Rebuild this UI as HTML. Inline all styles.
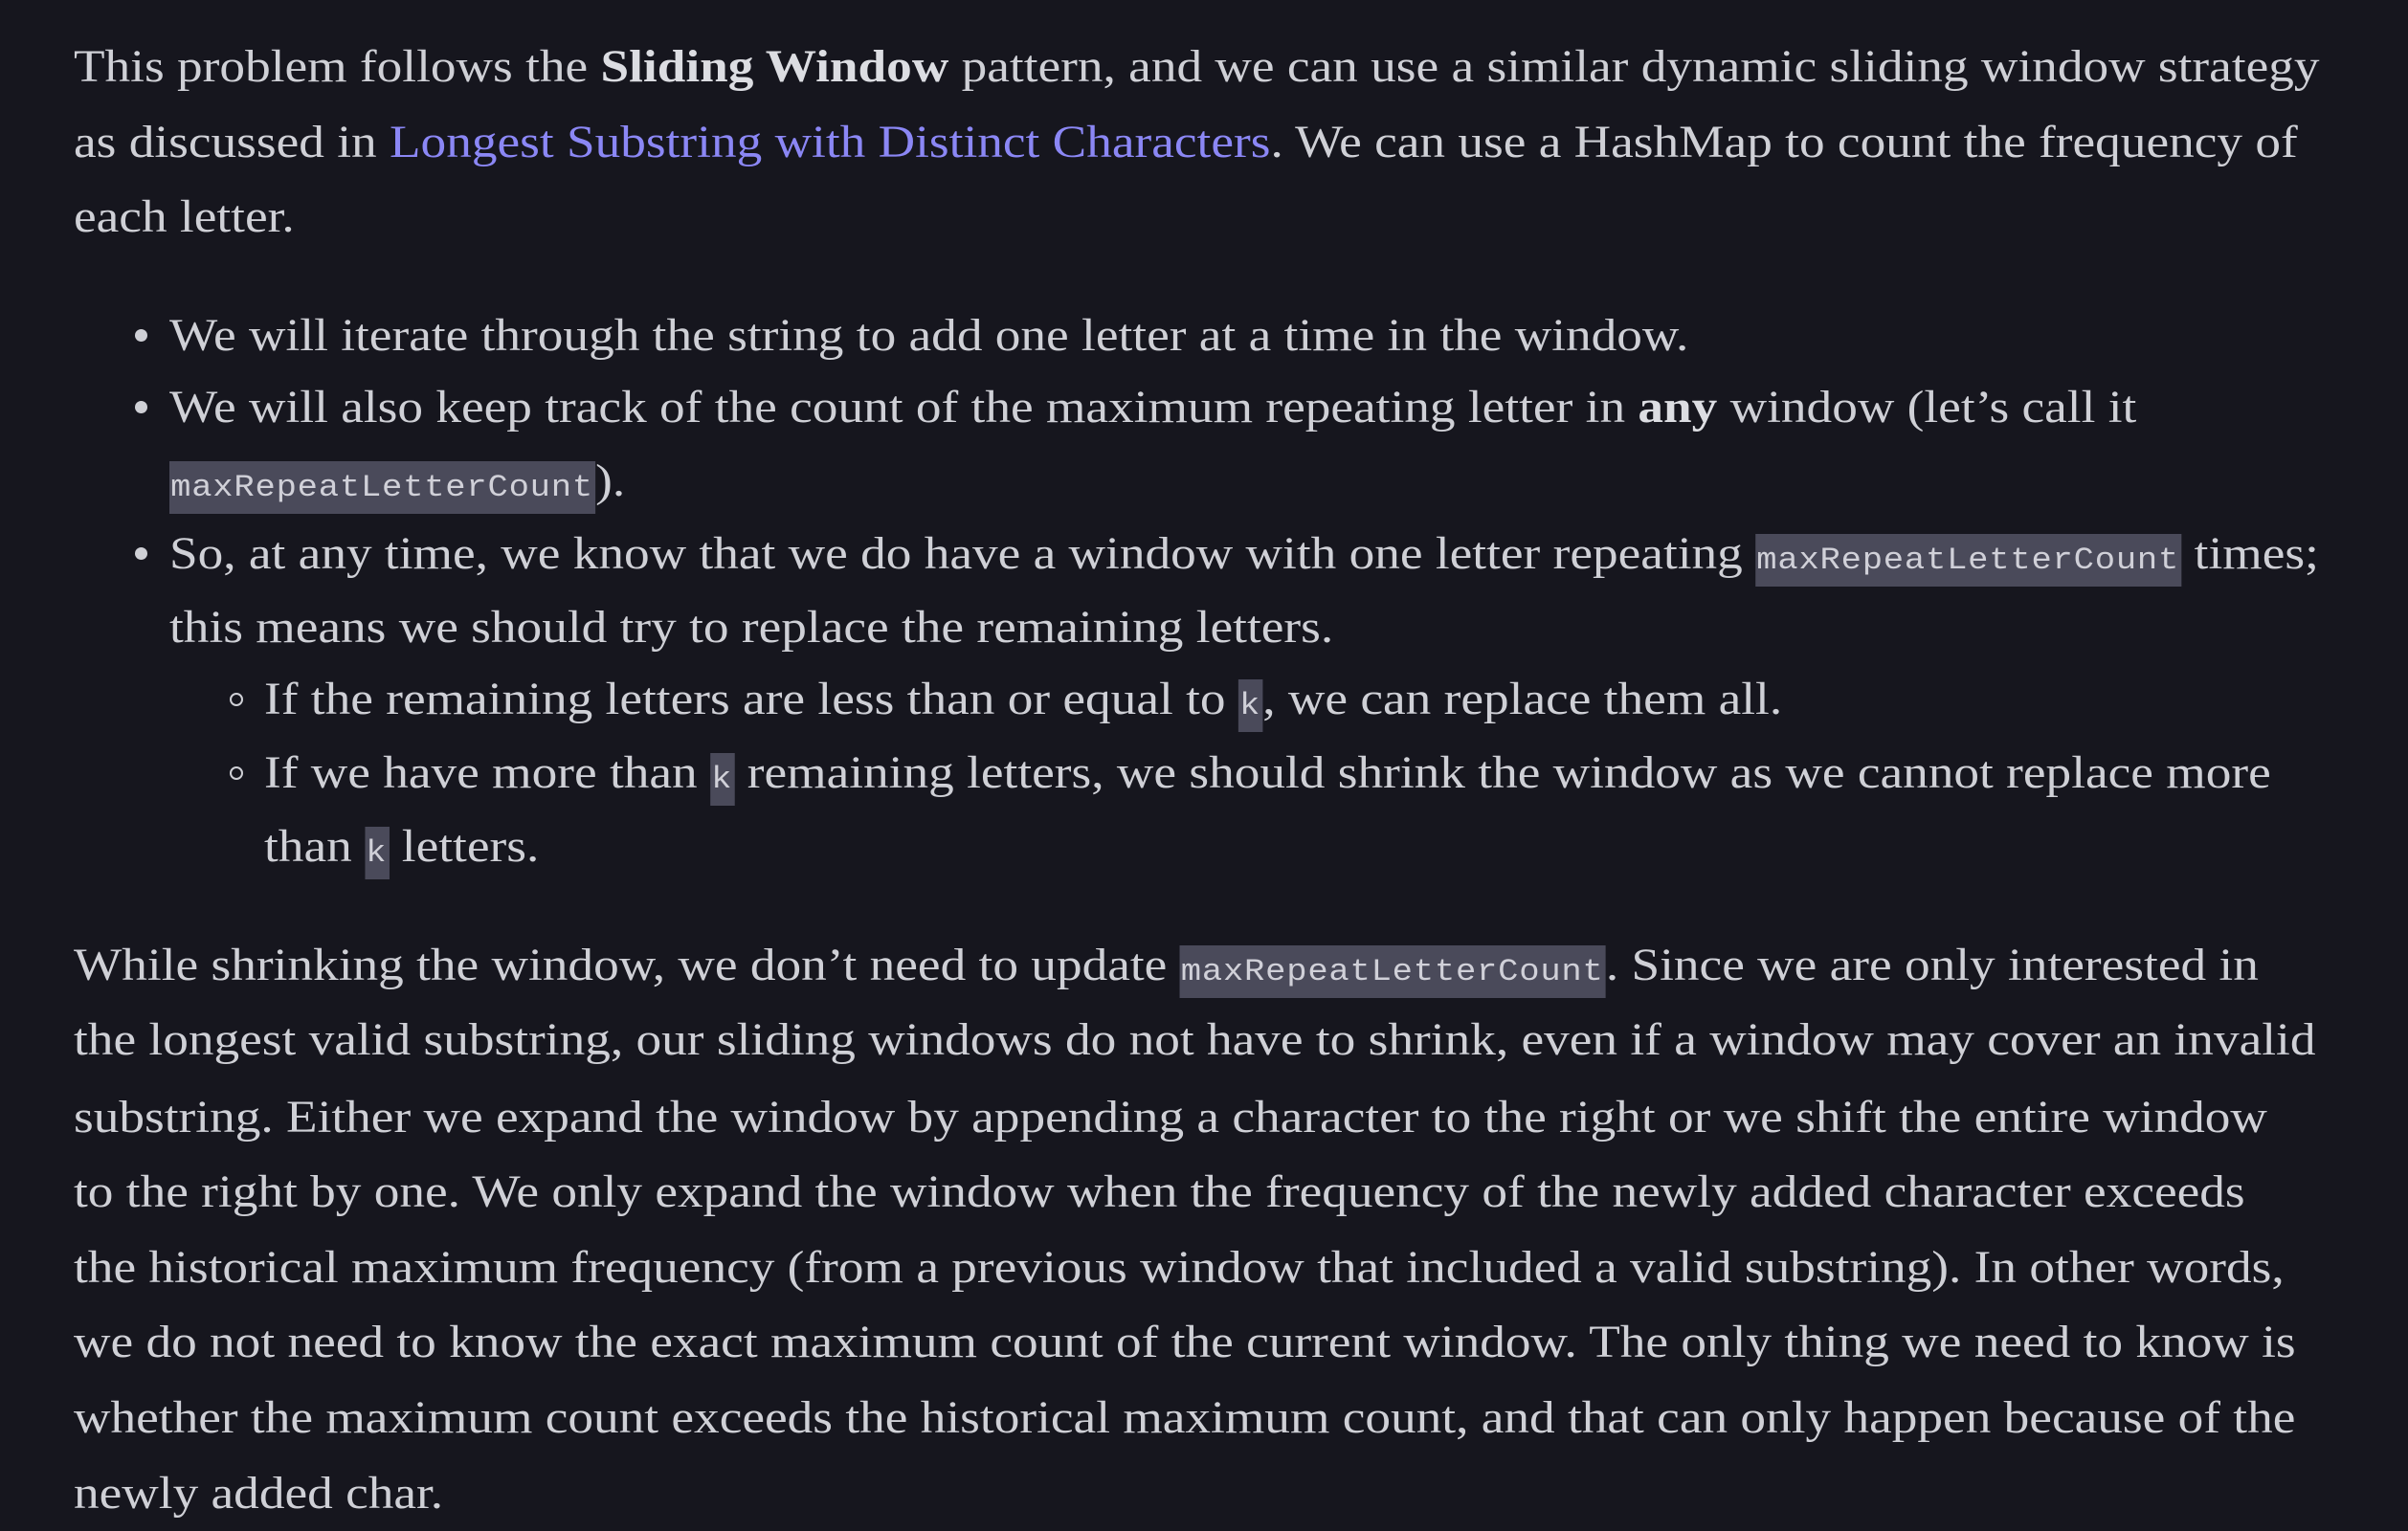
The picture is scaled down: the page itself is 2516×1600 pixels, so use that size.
<!DOCTYPE html>
<html><head><meta charset="utf-8">
<style>
html,body{margin:0;padding:0;background:#16161e;}
body{width:2516px;height:1595px;position:relative;overflow:hidden;font-family:"Liberation Serif","DejaVu Serif",serif;color:#cfd0d6;font-size:48px;}
.l{position:absolute;white-space:nowrap;line-height:78px;height:78px;transform:scaleX(1.11);transform-origin:0 0;}
b{color:#dcdde2;}
a{color:#8b87f5;text-decoration:none;}
code{font-family:"Liberation Mono","DejaVu Sans Mono",monospace;font-size:32px;letter-spacing:0.7px;background:#4a4a5a;color:#d0d0d8;padding:9px 2px 9px 1px;}
.dot{position:absolute;width:13px;height:13px;border-radius:50%;background:#cfd0d6;}
.circ{position:absolute;width:10px;height:10px;border-radius:50%;border:2px solid #cfd0d6;}
</style></head><body>
<div class="l" style="left:77px;top:31px">This problem follows the <b>Sliding Window</b> pattern, and we can use a similar dynamic sliding window strategy</div>
<div class="l" style="left:77px;top:110px">as discussed in <a>Longest Substring with Distinct Characters</a>. We can use a HashMap to count the frequency of</div>
<div class="l" style="left:77px;top:188px">each letter.</div>

<div class="dot" style="left:141px;top:344px"></div>
<div class="l" style="left:177px;top:312px">We will iterate through the string to add one letter at a time in the window.</div>
<div class="dot" style="left:141px;top:419px"></div>
<div class="l" style="left:177px;top:387px">We will also keep track of the count of the maximum repeating letter in <b>any</b> window (let’s call it</div>
<div class="l" style="left:177px;top:464px"><code>maxRepeatLetterCount</code>).</div>
<div class="dot" style="left:141px;top:572px"></div>
<div class="l" style="left:177px;top:540px">So, at any time, we know that we do have a window with one letter repeating <code>maxRepeatLetterCount</code> times;</div>
<div class="l" style="left:177px;top:617px">this means we should try to replace the remaining letters.</div>
<div class="circ" style="left:240px;top:724px"></div>
<div class="l" style="left:276px;top:692px">If the remaining letters are less than or equal to <code>k</code>, we can replace them all.</div>
<div class="circ" style="left:240px;top:801px"></div>
<div class="l" style="left:276px;top:769px">If we have more than <code>k</code> remaining letters, we should shrink the window as we cannot replace more</div>
<div class="l" style="left:276px;top:846px">than <code>k</code> letters.</div>

<div class="l" style="left:77px;top:970px">While shrinking the window, we don’t need to update <code>maxRepeatLetterCount</code>. Since we are only interested in</div>
<div class="l" style="left:77px;top:1048px">the longest valid substring, our sliding windows do not have to shrink, even if a window may cover an invalid</div>
<div class="l" style="left:77px;top:1129px">substring. Either we expand the window by appending a character to the right or we shift the entire window</div>
<div class="l" style="left:77px;top:1207px">to the right by one. We only expand the window when the frequency of the newly added character exceeds</div>
<div class="l" style="left:77px;top:1286px">the historical maximum frequency (from a previous window that included a valid substring). In other words,</div>
<div class="l" style="left:77px;top:1364px">we do not need to know the exact maximum count of the current window. The only thing we need to know is</div>
<div class="l" style="left:77px;top:1443px">whether the maximum count exceeds the historical maximum count, and that can only happen because of the</div>
<div class="l" style="left:77px;top:1522px">newly added char.</div>
</body></html>
